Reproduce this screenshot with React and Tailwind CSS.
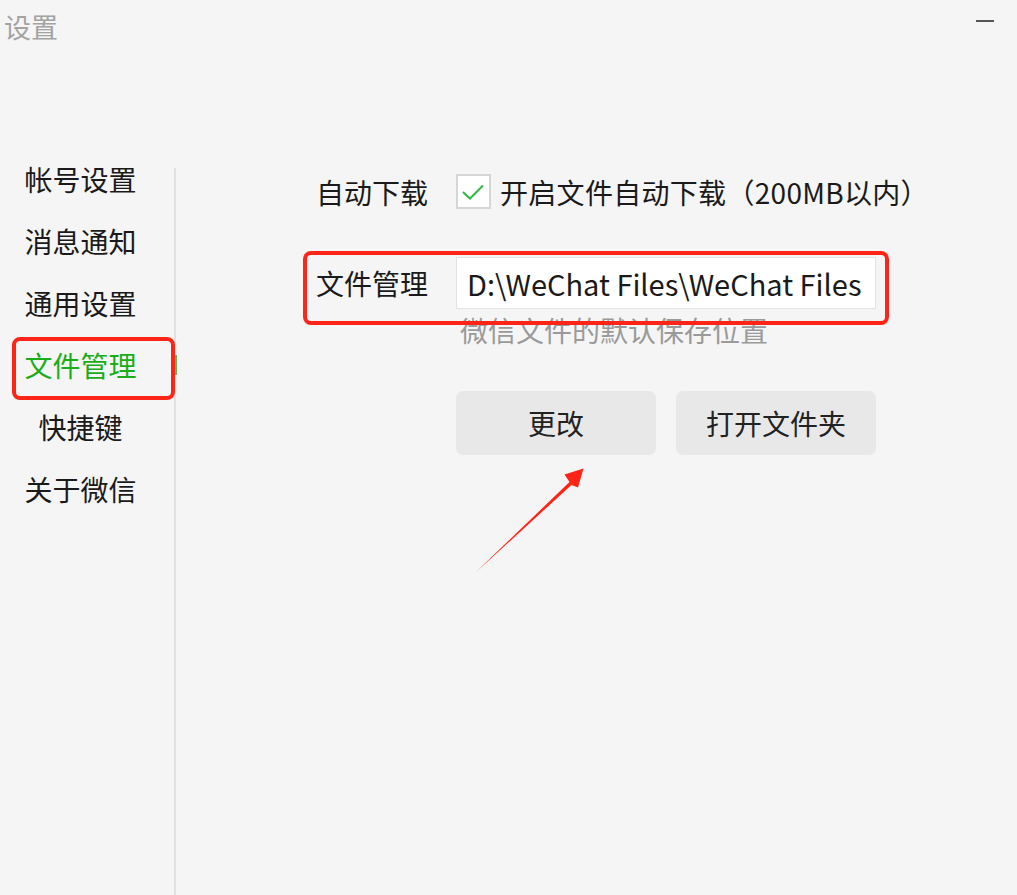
import React from "react";

const navItems = ["帐号设置", "消息通知", "通用设置", "文件管理", "快捷键", "关于微信"];

export default function App() {
    const font = { fontFamily: '"Noto Sans CJK SC", "Noto Sans", sans-serif' };

    return (
        <div
            className="relative w-[1017px] h-[895px] bg-[#f5f5f5] flex flex-col overflow-hidden text-[#1a1a1a]"
            style={font}
        >
            {/* title bar */}
            <div className="h-[168px] flex items-start justify-between">
                <div className="pl-[4px] pt-[11px] text-[27px] leading-[32px] text-[#a3a3a3]">设置</div>
                <div className="mt-[20px] mr-[23px] w-[18px] h-[2px] bg-[#555]" />
            </div>

            <div className="flex flex-1">
                {/* sidebar */}
                <div className="w-[174px] flex flex-col gap-[34px] -mt-[3px]">
                    {navItems.map((item) => (
                        <div
                            key={item}
                            className={`w-[161px] text-center text-[28px] leading-[28px] ${item === "文件管理" ? "text-[#1aad19]" : ""}`}
                        >
                            {item}
                        </div>
                    ))}
                </div>
                <div className="relative w-[2px] bg-[#e2e2e2]">
                    <div className="absolute left-0 top-[187px] w-[3px] h-[20px] bg-[#5cb85c]" />
                </div>

                {/* content */}
                <div className="flex-1 pl-[140px] pt-[6px]">
                    <div className="flex items-center h-[35px]">
                        <div className="w-[140px] text-[28px] leading-[28px]">自动下载</div>
                        <div className="w-[35px] h-[35px] bg-white border-2 border-[#d6d6d6] flex items-center justify-center">
                            <svg width="25" height="18" viewBox="0 0 25 18">
                                <polyline points="2,9 9,15.5 22,2.5" fill="none" stroke="#2fb84a" strokeWidth="2" />
                            </svg>
                        </div>
                        <div className="ml-[9px] text-[28px] leading-[28px] tracking-[0.3px]">开启文件自动下载（200MB以内）</div>
                    </div>

                    <div className="flex items-center mt-[48px] h-[52px]">
                        <div className="w-[140px] text-[28px] leading-[28px]">文件管理</div>
                        <div className="w-[420px] h-[52px] bg-white border border-[#e3e3e3] flex items-center pl-[10px] text-[29px] leading-[28px] whitespace-nowrap overflow-hidden">
                            D:\WeChat Files\WeChat Files
                        </div>
                    </div>
                    <div className="ml-[140px] mt-[7px] pl-[4px] text-[28px] leading-[28px] text-[#9a9a9a]">
                        微信文件的默认保存位置
                    </div>

                    <div className="ml-[140px] mt-[47px] flex gap-[20px]">
                        <button className="w-[200px] h-[64px] rounded-[7px] bg-[#e8e8e8] text-[28px] text-[#222]">更改</button>
                        <button className="w-[200px] h-[64px] rounded-[7px] bg-[#e8e8e8] text-[28px] text-[#222]">打开文件夹</button>
                    </div>
                </div>
            </div>

            {/* red annotations */}
            <div className="absolute left-[12px] top-[337px] w-[163px] h-[63px] border-4 border-[#fe2418] rounded-[8px]" />
            <div className="absolute left-[303px] top-[251px] w-[586px] h-[74px] border-4 border-[#fe2418] rounded-[8px]" />
            <svg className="absolute left-0 top-0 pointer-events-none" width="1017" height="895">
                <polygon
                    points="475.5,572.5 569.5,482 564.5,474.5 583.5,468.5 578,487.5 571.5,485"
                    fill="#fe2418"
                />
            </svg>
        </div>
    );
}
